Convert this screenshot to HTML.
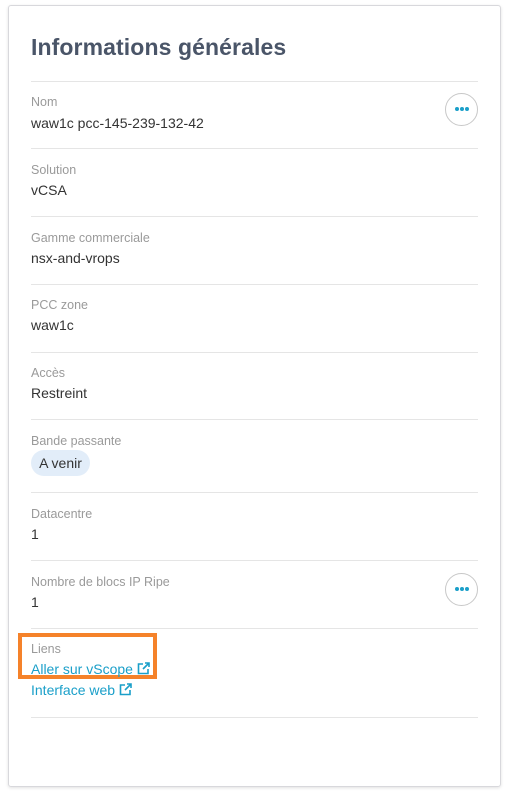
<!DOCTYPE html>
<html><head><meta charset="utf-8"><style>
body{margin:0;width:507px;height:794px;background:#fff;font-family:"Liberation Sans",sans-serif;position:relative;overflow:hidden}
.card{position:absolute;left:8px;top:5px;width:491px;height:780px;border:1px solid #d8d8dc;border-radius:3px;box-shadow:0 1px 3px rgba(0,0,0,.12)}
.t{position:absolute;left:31px;top:34px;font-size:23px;font-weight:bold;color:#4a5568;letter-spacing:0.1px}
.hr{position:absolute;left:31px;width:447px;height:1px;background:#e5e5e5}
.l{position:absolute;left:31px;font-size:12.5px;color:#9a9a9a}
.v{position:absolute;left:31px;font-size:14px;color:#333}
.a{position:absolute;left:31px;font-size:14px;color:#1a9fc9}
.btn{position:absolute;left:445px;width:31px;height:31px;border:1px solid #c8c8c8;border-radius:50%;background:#fff;text-align:center}
.btn i{display:inline-block;width:4px;height:4px;border-radius:50%;background:#1a9fc9;margin:13px 0.5px 0}
.badge{position:absolute;left:31px;top:450px;width:59px;height:26px;border-radius:13px;background:#e2edf9;color:#333;font-size:14px;line-height:26px;text-align:center}
.box{position:absolute;left:18px;top:633px;width:131px;height:38px;border:4px solid #f5822a}
svg{vertical-align:-1px}
</style></head><body>
<div class="card"></div>
<div class="t">Informations générales</div>
<div class="hr" style="top:81px"></div>
<div class="l" style="top:95px">Nom</div><div class="v" style="top:115px">waw1c pcc-145-239-132-42</div>
<div class="btn" style="top:93px"><i></i><i></i><i></i></div>
<div class="hr" style="top:148px"></div>
<div class="l" style="top:163px">Solution</div><div class="v" style="top:182px">vCSA</div>
<div class="hr" style="top:216px"></div>
<div class="l" style="top:231px">Gamme commerciale</div><div class="v" style="top:250px">nsx-and-vrops</div>
<div class="hr" style="top:284px"></div>
<div class="l" style="top:298px">PCC zone</div><div class="v" style="top:317px">waw1c</div>
<div class="hr" style="top:352px"></div>
<div class="l" style="top:366px">Accès</div><div class="v" style="top:385px">Restreint</div>
<div class="hr" style="top:419px"></div>
<div class="l" style="top:434px">Bande passante</div>
<div class="badge">A venir</div>
<div class="hr" style="top:492px"></div>
<div class="l" style="top:507px">Datacentre</div><div class="v" style="top:526px">1</div>
<div class="hr" style="top:560px"></div>
<div class="l" style="top:575px">Nombre de blocs IP Ripe</div><div class="v" style="top:594px">1</div>
<div class="btn" style="top:573px"><i></i><i></i><i></i></div>
<div class="hr" style="top:628px"></div>
<div class="box"></div>
<div class="l" style="top:642px">Liens</div>
<div class="a" style="top:661px">Aller sur vScope <svg width="13" height="13" viewBox="0 0 13 13" fill="none" stroke="#1a9fc9" stroke-width="1.6"><path d="M6 2H1.5v9.5H11V7"/><path d="M6 7l6-6M8 1h4v4"/></svg></div>
<div class="a" style="top:682px">Interface web <svg width="13" height="13" viewBox="0 0 13 13" fill="none" stroke="#1a9fc9" stroke-width="1.6"><path d="M6 2H1.5v9.5H11V7"/><path d="M6 7l6-6M8 1h4v4"/></svg></div>
<div class="hr" style="top:717px"></div>
</body></html>
